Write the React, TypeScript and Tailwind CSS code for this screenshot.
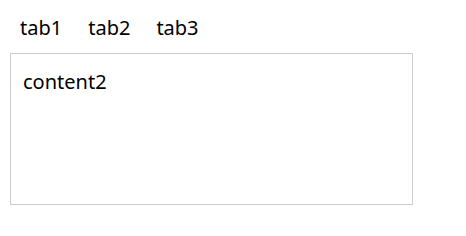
import { useState } from 'react';

const TABS = ['tab1', 'tab2', 'tab3'];

export default function App() {
  const [active, setActive] = useState(1);

  return (
    <div className="min-h-screen bg-white text-black font-['Noto_Sans',sans-serif] text-[20px] leading-[24px]">
      <div className="pt-[16px] pl-[10px]">
        <ul className="flex gap-[6px]">
          {TABS.map((tab, i) => (
            <li
              key={tab}
              onClick={() => setActive(i)}
              className="px-[10px] cursor-pointer"
            >
              {tab}
            </li>
          ))}
        </ul>
        <div className="mt-[13px] w-[403px] h-[152px] border border-[#cccccc] pt-[16px] pl-[12px]">
          content{active + 1}
        </div>
      </div>
    </div>
  );
}
